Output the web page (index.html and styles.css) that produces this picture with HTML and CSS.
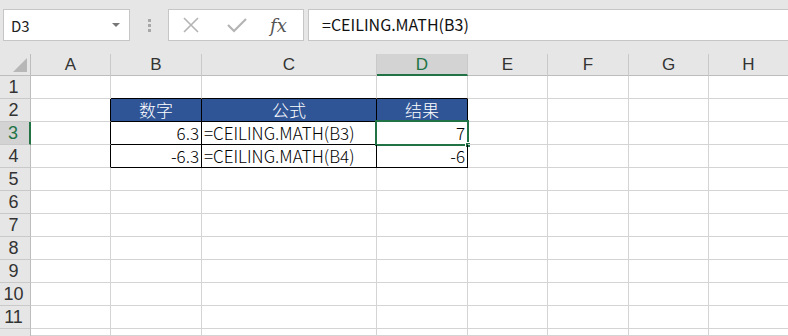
FILE: index.html
```html
<!DOCTYPE html>
<html>
<head>
<meta charset="utf-8">
<link rel="stylesheet" href="styles.css">
</head>
<body>
<div class="toolbar">
  <div class="namebox"><span class="name">D3</span><span class="caret"></span></div>
  <div class="dots"><i></i><i></i><i></i></div>
  <div class="fxbox">
    <svg class="ico" width="20" height="20" viewBox="0 0 20 20"><path d="M3 3 L17 17 M17 3 L3 17" stroke="#b4b4b4" stroke-width="1.6" fill="none"/></svg>
    <svg class="ico" width="22" height="20" viewBox="0 0 22 20"><path d="M2 10 L8 16 L20 4" stroke="#b4b4b4" stroke-width="2.2" fill="none"/></svg>
    <span class="fx">fx</span>
  </div>
  <div class="formula">=CEILING.MATH(B3)</div>
</div>
<div class="grid">
  <div class="corner"><span class="tri"></span></div>
  <div class="ch">A</div><div class="ch">B</div><div class="ch">C</div><div class="ch sel">D</div><div class="ch">E</div><div class="ch">F</div><div class="ch">G</div><div class="ch">H</div>

  <div class="rh">1</div><div class="c"></div><div class="c bb"></div><div class="c bb"></div><div class="c bb"></div><div class="c"></div><div class="c"></div><div class="c"></div><div class="c"></div>

  <div class="rh">2</div><div class="c br"></div><div class="c hd">数字</div><div class="c hd">公式</div><div class="c hd">结果</div><div class="c"></div><div class="c"></div><div class="c"></div><div class="c"></div>

  <div class="rh sel">3</div><div class="c br"></div><div class="c t num">6.3</div><div class="c t">=CEILING.MATH(B3)</div><div class="c t num active">7<span class="selbox"></span><span class="handle"></span></div><div class="c"></div><div class="c"></div><div class="c"></div><div class="c"></div>

  <div class="rh">4</div><div class="c br"></div><div class="c t num">-6.3</div><div class="c t">=CEILING.MATH(B4)</div><div class="c t num">-6</div><div class="c"></div><div class="c"></div><div class="c"></div><div class="c"></div>

  <div class="rh">5</div><div class="c"></div><div class="c"></div><div class="c"></div><div class="c"></div><div class="c"></div><div class="c"></div><div class="c"></div><div class="c"></div>
  <div class="rh">6</div><div class="c"></div><div class="c"></div><div class="c"></div><div class="c"></div><div class="c"></div><div class="c"></div><div class="c"></div><div class="c"></div>
  <div class="rh">7</div><div class="c"></div><div class="c"></div><div class="c"></div><div class="c"></div><div class="c"></div><div class="c"></div><div class="c"></div><div class="c"></div>
  <div class="rh">8</div><div class="c"></div><div class="c"></div><div class="c"></div><div class="c"></div><div class="c"></div><div class="c"></div><div class="c"></div><div class="c"></div>
  <div class="rh">9</div><div class="c"></div><div class="c"></div><div class="c"></div><div class="c"></div><div class="c"></div><div class="c"></div><div class="c"></div><div class="c"></div>
  <div class="rh">10</div><div class="c"></div><div class="c"></div><div class="c"></div><div class="c"></div><div class="c"></div><div class="c"></div><div class="c"></div><div class="c"></div>
  <div class="rh">11</div><div class="c"></div><div class="c"></div><div class="c"></div><div class="c"></div><div class="c"></div><div class="c"></div><div class="c"></div><div class="c"></div>
  <div class="rh last">12</div><div class="c"></div><div class="c"></div><div class="c"></div><div class="c"></div><div class="c"></div><div class="c"></div><div class="c"></div><div class="c"></div>
</div>
</body>
</html>
```
FILE: styles.css
```css
* { box-sizing: border-box; }
html, body { margin: 0; padding: 0; }
body {
  width: 788px;
  height: 336px;
  overflow: hidden;
  background: #ffffff;
  font-family: "Noto Sans CJK SC", "Liberation Sans", sans-serif;
  font-weight: 300;
  color: #000;
}
.toolbar {
  height: 54px;
  background: #e6e6e6;
  display: flex;
  align-items: flex-start;
  padding-top: 9px;
  padding-left: 3px;
}
.namebox {
  width: 127px;
  height: 32px;
  background: #fff;
  border: 1px solid #c6c6c6;
  display: flex;
  align-items: center;
  justify-content: space-between;
  padding: 0 9px 0 7px;
}
.name { font-size: 15px; color: #222; font-weight: 400; }
.caret {
  width: 0; height: 0;
  border-left: 4px solid transparent;
  border-right: 4px solid transparent;
  border-top: 4px solid #777;
}
.dots {
  width: 38px;
  height: 32px;
  display: flex;
  flex-direction: column;
  align-items: center;
  justify-content: center;
  gap: 2px;
}
.dots i { width: 3px; height: 3px; background: #a8a8a8; display: block; }
.fxbox {
  width: 136px;
  height: 32px;
  background: #fff;
  border: 1px solid #c6c6c6;
  display: flex;
  align-items: center;
  padding-left: 12px;
  gap: 25px;
}
.ico { display: block; }
.fx {
  font-family: "DejaVu Serif", "Liberation Serif", serif;
  font-style: italic;
  font-size: 18px;
  font-weight: 400;
  color: #555;
  margin-left: -3px;
}
.formula {
  flex: 1;
  margin-left: 4px;
  height: 32px;
  background: #fff;
  border-top: 1px solid #c6c6c6;
  border-bottom: 1px solid #c6c6c6;
  border-left: 1px solid #c6c6c6;
  font-size: 16px;
  font-weight: 400;
  line-height: 29px;
  padding-left: 13px;
  color: #111;
}
.grid {
  display: grid;
  grid-template-columns: 31px 80px 91px 175px 91px 80px 81px 80px 80px;
  grid-template-rows: 22px repeat(11, 23px) 7px;
  overflow: hidden;
}
.corner {
  background: #e6e6e6;
  border-right: 1px solid #bdbdbd;
  border-bottom: 1px solid #bdbdbd;
  position: relative;
}
.tri {
  position: absolute;
  right: 3px;
  bottom: 3px;
  width: 0; height: 0;
  border-left: 14px solid transparent;
  border-bottom: 14px solid #b7b7b7;
}
.ch {
  background: #e6e6e6;
  border-right: 1px solid #c9c9c9;
  border-bottom: 1px solid #bdbdbd;
  font-family: "Liberation Sans", sans-serif;
  font-weight: 400;
  font-size: 17px;
  color: #333;
  text-align: center;
  line-height: 21px;
}
.ch.sel {
  background: #d3d3d3;
  border-bottom: 2px solid #217346;
  color: #217346;
}
.rh {
  background: #e6e6e6;
  border-right: 1px solid #bdbdbd;
  border-bottom: 1px solid #c9c9c9;
  font-family: "Liberation Sans", sans-serif;
  font-weight: 400;
  font-size: 18px;
  color: #333;
  text-align: center;
  line-height: 23px;
  padding-right: 3px;
  overflow: hidden;
}
.rh.last { line-height: 30px; border-bottom: 0; }
.rh.sel {
  background: #d3d3d3;
  border-right: 2px solid #217346;
  color: #217346;
}
.c {
  border-right: 1px solid #d4d4d4;
  border-bottom: 1px solid #d4d4d4;
  font-size: 17px;
  line-height: 22px;
  white-space: nowrap;
  overflow: visible;
  position: relative;
}
.c.bb { border-bottom-color: #000; }
.c.br { border-right-color: #000; }
.c.hd {
  background: #2f5597;
  color: #fff;
  text-align: center;
  border-right-color: #000;
  border-bottom-color: #000;
}
.c.t {
  border-right-color: #000;
  border-bottom-color: #000;
  padding: 0 2px;
  color: #000;
}
.c.num { text-align: right; }
.selbox {
  position: absolute;
  left: -2px;
  top: -2px;
  right: -2px;
  bottom: -2px;
  border: 2px solid #217346;
}
.handle {
  position: absolute;
  right: -4px;
  bottom: -4px;
  width: 6px;
  height: 6px;
  background: #217346;
  border: 1px solid #fff;
}
```
